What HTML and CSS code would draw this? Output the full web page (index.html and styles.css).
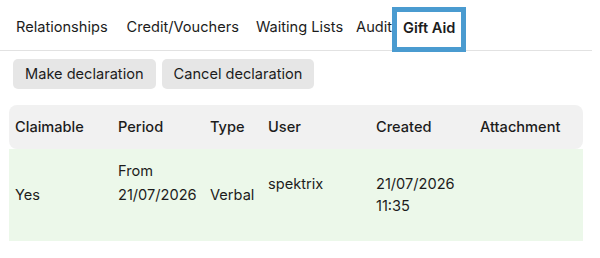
FILE: index.html
```html
<!DOCTYPE html>
<html lang="en">
<head>
  <meta charset="UTF-8">
  <title>Gift Aid</title>
  <link rel="stylesheet" href="styles.css">
</head>
<body>
  <nav class="tabs">
    <a class="tab" href="#">Relationships</a>
    <a class="tab" href="#">Credit/Vouchers</a>
    <a class="tab tab-close" href="#">Waiting Lists</a>
    <a class="tab tab-tight" href="#">Audit</a>
    <a class="tab active" href="#">Gift Aid</a>
  </nav>

  <div class="actions">
    <button class="btn">Make declaration</button>
    <button class="btn">Cancel declaration</button>
  </div>

  <table class="declarations">
    <thead>
      <tr>
        <th class="col-claim">Claimable</th>
        <th class="col-period">Period</th>
        <th class="col-type">Type</th>
        <th class="col-user">User</th>
        <th class="col-created">Created</th>
        <th>Attachment</th>
      </tr>
    </thead>
    <tbody>
      <tr class="claimable">
        <td>Yes</td>
        <td class="period">From<br>21/07/2026<br>&nbsp;</td>
        <td>Verbal</td>
        <td>spektrix<br>&nbsp;</td>
        <td>21/07/2026<br>11:35</td>
        <td></td>
      </tr>
    </tbody>
  </table>
</body>
</html>
```

FILE: styles.css
```css
body {
  margin: 0;
  font-family: Inter, "Noto Sans", sans-serif;
  font-size: 14.6px;
  color: #1c1c1c;
  background: #fff;
}

.tabs {
  display: flex;
  align-items: flex-end;
  height: 50px;
  border-bottom: 1px solid #e2e2e2;
  margin-right: 8px;
  padding-left: 16px;
}

.tab {
  color: #1c1c1c;
  text-decoration: none;
  margin-right: 17px;
  padding-bottom: 14px;
  white-space: nowrap;
}
.tab:first-child {
  margin-right: 19px;
}
.tab-close {
  margin-right: 13px;
}
.tab-tight {
  margin-right: 0;
}
.tab.active {
  font-weight: 600;
  border: 5px solid #4a9bd0;
  padding: 7px 6px 10px 6px;
  margin-bottom: -2px;
}

.actions {
  display: flex;
  gap: 6px;
  padding: 8px 13px;
}

.btn {
  font: inherit;
  color: #1c1c1c;
  background: #e6e6e6;
  border: none;
  border-radius: 5px;
  height: 30px;
  padding: 0 12px;
}

.declarations {
  margin: 8px 9px 0 9px;
  width: 574px;
  border-collapse: separate;
  border-spacing: 0;
}

.declarations th {
  background: #f1f1f1;
  font-weight: 500;
  text-align: left;
  height: 44px;
  padding: 0 6px;
}
.declarations th:first-child {
  border-radius: 8px 0 0 8px;
}
.declarations th:last-child {
  border-radius: 0 8px 8px 0;
}

.col-claim { width: 91px; }
.col-period { width: 80px; }
.col-type { width: 46px; }
.col-user { width: 96px; }
.col-created { width: 92px; }

.claimable td {
  background: #ecf8ea;
  height: 92px;
  padding: 0 6px;
  line-height: 22px;
}

.claimable .period {
  line-height: 24px;
}
```
